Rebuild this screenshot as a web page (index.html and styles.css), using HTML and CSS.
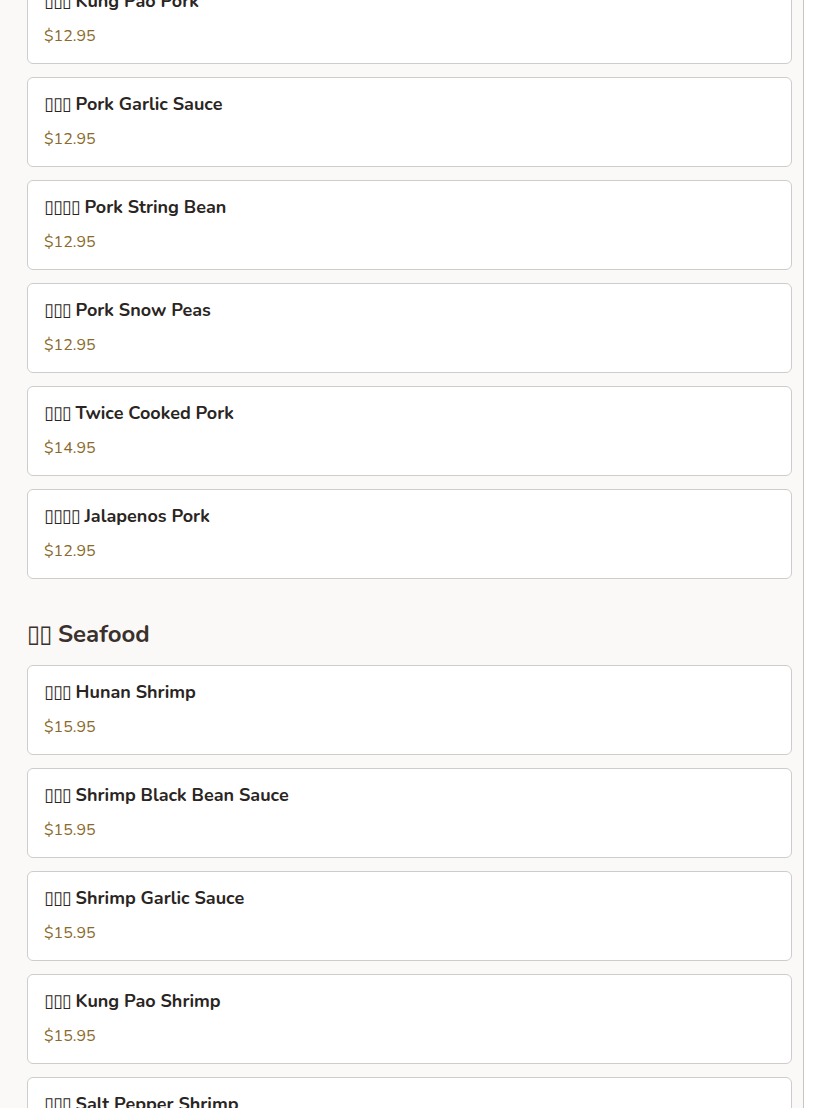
FILE: index.html
```html
<!DOCTYPE html>
<html lang="en">
<head>
<meta charset="utf-8">
<title>Menu</title>
<link rel="stylesheet" href="styles.css">
</head>
<body>
<main class="page">
  <section class="section">
    <div class="list">
      <div class="card"><div class="name"><span class="zh">▯▯▯</span> Kung Pao Pork</div><div class="price">$12.95</div></div>
      <div class="card"><div class="name"><span class="zh">▯▯▯</span> Pork Garlic Sauce</div><div class="price">$12.95</div></div>
      <div class="card"><div class="name"><span class="zh">▯▯▯▯</span> Pork String Bean</div><div class="price">$12.95</div></div>
      <div class="card"><div class="name"><span class="zh">▯▯▯</span> Pork Snow Peas</div><div class="price">$12.95</div></div>
      <div class="card"><div class="name"><span class="zh">▯▯▯</span> Twice Cooked Pork</div><div class="price">$14.95</div></div>
      <div class="card"><div class="name"><span class="zh">▯▯▯▯</span> Jalapenos Pork</div><div class="price">$12.95</div></div>
    </div>
  </section>
  <section class="section">
    <h2 class="heading"><span class="zh">▯▯</span> Seafood</h2>
    <div class="list">
      <div class="card"><div class="name"><span class="zh">▯▯▯</span> Hunan Shrimp</div><div class="price">$15.95</div></div>
      <div class="card"><div class="name"><span class="zh">▯▯▯</span> Shrimp Black Bean Sauce</div><div class="price">$15.95</div></div>
      <div class="card"><div class="name"><span class="zh">▯▯▯</span> Shrimp Garlic Sauce</div><div class="price">$15.95</div></div>
      <div class="card"><div class="name"><span class="zh">▯▯▯</span> Kung Pao Shrimp</div><div class="price">$15.95</div></div>
      <div class="card"><div class="name"><span class="zh">▯▯▯</span> Salt Pepper Shrimp</div><div class="price">$15.95</div></div>
    </div>
  </section>
</main>
</body>
</html>
```

FILE: styles.css
```css
html, body {
  margin: 0;
  padding: 0;
  background: #ffffff;
}
body {
  font-family: "Nunito", "Lato", "Open Sans", sans-serif;
  color: #2a2522;
  overflow: hidden;
}
.page {
  box-sizing: border-box;
  width: 804px;
  margin-top: -26px;
  padding: 0 11px 40px 27px;
  background: #faf9f7;
  border-right: 1px solid #c8c6c4;
  min-height: 1200px;
}
.list {
  display: flex;
  flex-direction: column;
  gap: 13px;
}
.card {
  background: #ffffff;
  border: 1px solid #cfcdcb;
  border-radius: 6px;
  padding: 15px 16px 16px;
  display: flex;
  flex-direction: column;
  gap: 13px;
}
.name {
  font-size: 18px;
  line-height: 22px;
  font-weight: 700;
  color: #2a2522;
}
.price {
  font-size: 16px;
  line-height: 22px;
  color: #8a6a2c;
}
.zh {
  font-family: "DejaVu Sans", sans-serif;
  font-weight: 400;
  letter-spacing: -1px;
}
.heading {
  margin: 39px 0 15px;
  font-size: 24px;
  line-height: 32px;
  font-weight: 700;
  color: #3a302c;
}
```
